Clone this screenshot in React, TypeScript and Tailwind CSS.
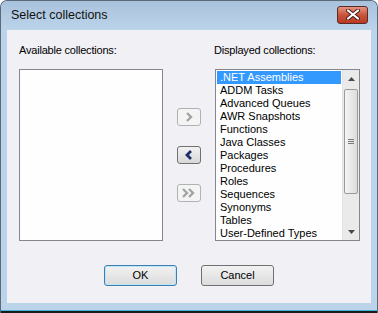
const available: string[] = [];

const displayed = [
  ".NET Assemblies",
  "ADDM Tasks",
  "Advanced Queues",
  "AWR Snapshots",
  "Functions",
  "Java Classes",
  "Packages",
  "Procedures",
  "Roles",
  "Sequences",
  "Synonyms",
  "Tables",
  "User-Defined Types",
];

function Chevron({ dir, double, enabled }: { dir: "left" | "right"; double?: boolean; enabled?: boolean }) {
  const stroke = enabled ? "#1d2f6b" : "#a3a3a3";
  const pts = dir === "right" ? "0,0 4,4 0,8" : "4,0 0,4 4,8";
  return (
    <svg width={double ? 14 : 8} height="10" viewBox={double ? "-1 -1 14 10" : "-2 -1 8 10"}>
      <polyline points={pts} fill="none" stroke={stroke} strokeWidth={enabled ? 2.8 : 2.4} />
      {double && (
        <polyline points={pts} transform="translate(6 0)" fill="none" stroke={stroke} strokeWidth="2.4" />
      )}
    </svg>
  );
}

function MoveButton({ children, enabled }: { children: React.ReactNode; enabled?: boolean }) {
  return (
    <button
      className={`flex justify-center items-center w-[24px] h-[18px] rounded-[3px] border ${
        enabled
          ? "border-[#707070] bg-gradient-to-b from-[#f2f2f2] to-[#d8d8d8]"
          : "border-[#adb2b5] bg-[#f4f4f4]"
      }`}
    >
      {children}
    </button>
  );
}

function ListBox({ items }: { items: string[] }) {
  return (
    <div className="flex bg-[#fdfefd] border border-[#828790] w-full h-[172px]">
      <ul className="flex flex-col flex-1 pt-[1px] pl-[1px]">
        {items.map((item, i) => (
          <li
            key={item}
            className={`h-[13px] leading-[13px] pl-[3px] ${
              i === 0 ? "bg-[#3399ff] text-white w-[124px]" : "text-black"
            }`}
          >
            {item}
          </li>
        ))}
      </ul>
      {items.length > 0 && (
        <div className="flex flex-col bg-[#eaeaea] w-[17px] border-l border-[#e3e3e3]">
          <div className="flex justify-center items-center h-[17px]">
            <svg width="7" height="4" viewBox="0 0 7 4">
              <polygon points="0,4 3.5,0 7,4" fill="#4a4a4a" />
            </svg>
          </div>
          <div className="flex justify-center items-center mx-[1px] mt-[2px] h-[105px] rounded-[2px] border border-[#9a9a9a] bg-gradient-to-r from-[#f4f4f4] to-[#dcdcdc]">
            <div className="flex flex-col gap-[1px]">
              <div className="w-[6px] h-[1px] bg-[#7a7a7a]" />
              <div className="w-[6px] h-[1px] bg-[#7a7a7a]" />
              <div className="w-[6px] h-[1px] bg-[#7a7a7a]" />
            </div>
          </div>
          <div className="flex-1" />
          <div className="flex justify-center items-center h-[17px]">
            <svg width="7" height="4" viewBox="0 0 7 4">
              <polygon points="0,0 3.5,4 7,0" fill="#4a4a4a" />
            </svg>
          </div>
        </div>
      )}
    </div>
  );
}

export default function App() {
  return (
    <div
      className="flex flex-col w-[378px] h-[313px] bg-[#bcd4ea] rounded-t-[7px] border-t border-x border-[#5b6a7a] text-[11px] text-black"
      style={{ fontFamily: '"Liberation Sans", Arial, sans-serif' }}
    >
      {/* title bar */}
      <div className="flex justify-between items-center bg-gradient-to-b from-[#a9c2dc] to-[#bcd4ea] rounded-t-[7px] pl-[10px] pr-[9px] h-[29px] shrink-0">
        <span className="text-[12.5px] text-[#111]">Select collections</span>
        <button className="flex justify-center items-center w-[31px] h-[18px] rounded-[3px] border border-[#5a2a2a] bg-gradient-to-b from-[#e3957f] via-[#c9543a] to-[#b83a22] mt-[-2px]">
          <svg width="14" height="11" viewBox="0 0 14 11">
            <path d="M2 1.5 L12 9.5 M12 1.5 L2 9.5" stroke="#4a1a1a" strokeWidth="4" strokeLinecap="round" />
            <path d="M2 1.5 L12 9.5 M12 1.5 L2 9.5" stroke="#ffffff" strokeWidth="2.2" strokeLinecap="round" />
          </svg>
        </button>
      </div>

      {/* client area */}
      <div className="flex flex-col mx-[6px] bg-[#f1f0f5] h-[273px] pl-[12px] pt-[13px]">
        <div className="flex items-end">
          <div className="flex flex-col w-[144px]">
            <span className="h-[14px] leading-[14px] tracking-[-0.2px]">Available collections:</span>
            <div className="mt-[12px]">
              <ListBox items={available} />
            </div>
          </div>
          <div className="flex flex-col justify-center items-center gap-[20px] mx-[14px] h-[172px]">
            <MoveButton>
              <Chevron dir="right" />
            </MoveButton>
            <MoveButton enabled>
              <Chevron dir="left" enabled />
            </MoveButton>
            <MoveButton>
              <Chevron dir="right" double />
            </MoveButton>
          </div>
          <div className="flex flex-col w-[145px]">
            <span className="h-[14px] leading-[14px] ml-[-1px] tracking-[-0.2px]">Displayed collections:</span>
            <div className="mt-[12px]">
              <ListBox items={displayed} />
            </div>
          </div>
        </div>

        <div className="flex justify-center gap-[24px] mt-[24px] pr-[12px]">
          <button className="w-[73px] h-[21px] rounded-[3px] border border-[#3c7fb1] bg-gradient-to-b from-[#f2f2f2] to-[#dcdcdc] shadow-[inset_0_0_0_1px_#bde6fd]">
            OK
          </button>
          <button className="w-[73px] h-[21px] rounded-[3px] border border-[#707070] bg-gradient-to-b from-[#f2f2f2] to-[#dcdcdc]">
            Cancel
          </button>
        </div>
      </div>

      <div className="flex-1" />
      <div className="h-[1px] bg-[#3fb3d8]" />
      <div className="h-[2px] bg-[#1a1a1a]" />
    </div>
  );
}
